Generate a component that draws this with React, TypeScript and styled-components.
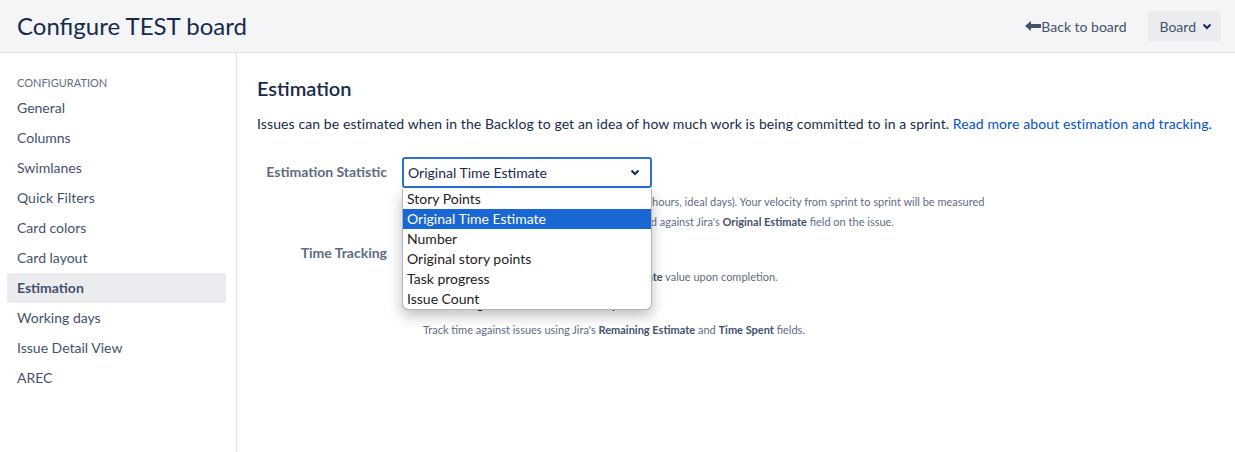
import React from 'react';
import styled, { createGlobalStyle } from 'styled-components';

const GlobalStyle = createGlobalStyle`
  body {
    margin: 0;
    background: #fff;
    font-family: Lato, "Liberation Sans", sans-serif;
    color: #172b4d;
  }
`;

const Page = styled.div`
  display: flex;
  flex-direction: column;
  height: 452px;
`;

const Header = styled.header`
  height: 53px;
  box-sizing: border-box;
  border-bottom: 1px solid #dfe1e6;
  background: #f4f5f7;
  display: flex;
  align-items: center;
  justify-content: space-between;
  padding: 0 14px 0 17px;
`;

const Title = styled.h1`
  margin: 0 0 2px;
  font-size: 24px;
  font-weight: 400;
  color: #172b4d;
`;

const HeaderActions = styled.div`
  display: flex;
  align-items: center;
  gap: 22px;
`;

const BackLink = styled.a`
  display: flex;
  align-items: center;
  font-size: 14px;
  color: #42526e;
  text-decoration: none;
`;

const BoardButton = styled.button`
  display: flex;
  align-items: center;
  gap: 6px;
  height: 30px;
  padding: 0 9px 0 11px;
  border: none;
  border-radius: 3px;
  background: #ebecf0;
  font-family: inherit;
  font-size: 14px;
  color: #42526e;
`;

const Body = styled.div`
  flex: 1;
  display: flex;
`;

const Sidebar = styled.nav`
  flex-shrink: 0;
  width: 237px;
  box-sizing: border-box;
  border-right: 1px solid #dfe1e6;
  padding: 22px 10px 0 7px;
`;

const SideHeading = styled.div`
  font-size: 11px;
  line-height: 16px;
  text-transform: uppercase;
  color: #5e6c84;
  padding-left: 10px;
  margin-bottom: 2px;
`;

const SideItem = styled.div<{ $active?: boolean }>`
  height: 30px;
  line-height: 30px;
  padding: 0 10px;
  border-radius: 3px;
  font-size: 14px;
  color: #42526e;
  font-weight: ${(p) => (p.$active ? 700 : 400)};
  background: ${(p) => (p.$active ? '#ebecf0' : 'transparent')};
`;

const Main = styled.main`
  flex: 1;
  min-width: 0;
  padding: 23px 0 0 20px;
`;

const Heading = styled.h2`
  margin: 0;
  font-size: 20px;
  line-height: 24px;
  font-weight: 600;
  color: #172b4d;
`;

const Intro = styled.p`
  margin: 14px 0 0;
  font-size: 14px;
  line-height: 20px;
  letter-spacing: 0.1px;
  white-space: nowrap;
  color: #172b4d;

  a {
    color: #0052cc;
    text-decoration: none;
  }
`;

const Form = styled.div`
  margin-top: 23px;
  display: grid;
  grid-template-columns: 130px 1fr;
  column-gap: 15px;
  row-gap: 11px;
  align-items: start;
`;

const Label = styled.div<{ $top: number }>`
  text-align: right;
  font-size: 14px;
  font-weight: 700;
  line-height: 20px;
  color: #5e6c84;
  padding-top: ${(p) => p.$top}px;
`;

const Field = styled.div`
  position: relative;
`;

const SelectBox = styled.div`
  width: 250px;
  height: 31px;
  box-sizing: border-box;
  border: 2px solid #2a6fdb;
  border-radius: 3px;
  display: flex;
  align-items: center;
  justify-content: space-between;
  padding: 0 10px 0 4px;
  font-size: 14px;
  color: #172b4d;
`;

const Menu = styled.ul`
  position: absolute;
  top: 32px;
  left: 0;
  width: 250px;
  box-sizing: border-box;
  margin: 0;
  padding: 0;
  list-style: none;
  background: #fff;
  border: 1px solid #b5b5b5;
  border-top: none;
  border-radius: 0 0 6px 6px;
  box-shadow: 0 6px 14px rgba(0, 0, 0, 0.25);
  overflow: hidden;
  z-index: 2;
`;

const MenuItem = styled.li<{ $selected?: boolean }>`
  height: 20px;
  line-height: 20px;
  padding-left: 4px;
  font-size: 14px;
  color: ${(p) => (p.$selected ? '#fff' : '#222')};
  background: ${(p) => (p.$selected ? '#1967d2' : 'transparent')};
`;

const Help = styled.div<{ $indent?: number; $gap?: number }>`
  font-size: 11px;
  line-height: 20px;
  color: #5e6c84;
  white-space: nowrap;
  padding-left: ${(p) => p.$indent ?? 1}px;
  margin-top: ${(p) => p.$gap ?? 4}px;

  b {
    color: #42526e;
  }
`;

const Option = styled.label<{ $gap?: number }>`
  display: flex;
  align-items: center;
  gap: 6px;
  font-size: 14px;
  line-height: 20px;
  color: #172b4d;
  margin-top: ${(p) => p.$gap ?? 0}px;
`;

const Radio = styled.span`
  width: 12px;
  height: 12px;
  box-sizing: border-box;
  border: 1px solid #7a869a;
  border-radius: 50%;
`;

const Chevron = () => (
  <svg width="10" height="7" viewBox="0 0 10 7">
    <path d="M1.5 1.5 L5 5 L8.5 1.5" fill="none" stroke="#172b4d" strokeWidth="2" />
  </svg>
);

const BackArrow = () => (
  <svg width="16" height="10" viewBox="0 0 16 10">
    <path d="M0 5 L6 0 L6 3 L16 3 L16 7 L6 7 L6 10 Z" fill="#42526e" />
  </svg>
);

const navItems = [
  'General',
  'Columns',
  'Swimlanes',
  'Quick Filters',
  'Card colors',
  'Card layout',
  'Estimation',
  'Working days',
  'Issue Detail View',
  'AREC',
];

const statistics = [
  'Story Points',
  'Original Time Estimate',
  'Number',
  'Original story points',
  'Task progress',
  'Issue Count',
];

const App: React.FC = () => {
  return (
    <Page>
      <GlobalStyle />
      <Header>
        <Title>Configure TEST board</Title>
        <HeaderActions>
          <BackLink href="#">
            <BackArrow />
            Back to board
          </BackLink>
          <BoardButton>
            Board
            <Chevron />
          </BoardButton>
        </HeaderActions>
      </Header>
      <Body>
        <Sidebar>
          <SideHeading>Configuration</SideHeading>
          {navItems.map((item) => (
            <SideItem key={item} $active={item === 'Estimation'}>
              {item}
            </SideItem>
          ))}
        </Sidebar>
        <Main>
          <Heading>Estimation</Heading>
          <Intro>
            Issues can be estimated when in the Backlog to get an idea of how much work is being
            committed to in a sprint. <a href="#">Read more about estimation and tracking.</a>
          </Intro>
          <Form>
            <Label $top={5}>Estimation Statistic</Label>
            <Field>
              <SelectBox>
                Original Time Estimate
                <Chevron />
              </SelectBox>
              <Menu>
                {statistics.map((s) => (
                  <MenuItem key={s} $selected={s === 'Original Time Estimate'}>
                    {s}
                  </MenuItem>
                ))}
              </Menu>
              <Help>
                Estimate and track issue using time based data (e.g. hours, ideal days). Your velocity from sprint to sprint will be measured
                <br />
                by the sum of the estimated time completed, tracked against Jira's <b>Original Estimate</b> field on the issue.
              </Help>
            </Field>
            <Label $top={0}>Time Tracking</Label>
            <Field>
              <Option>
                <Radio />
                None
              </Option>
              <Help $indent={21}>
                Issues will burndown their <b>Original Time Estimate</b> value upon completion.
              </Help>
              <Option $gap={7}>
                <Radio />
                Remaining Estimate and Time Spent
              </Option>
              <Help $indent={21} $gap={6}>
                Track time against issues using Jira's <b>Remaining Estimate</b> and <b>Time Spent</b> fields.
              </Help>
            </Field>
          </Form>
        </Main>
      </Body>
    </Page>
  );
};

export default App;
